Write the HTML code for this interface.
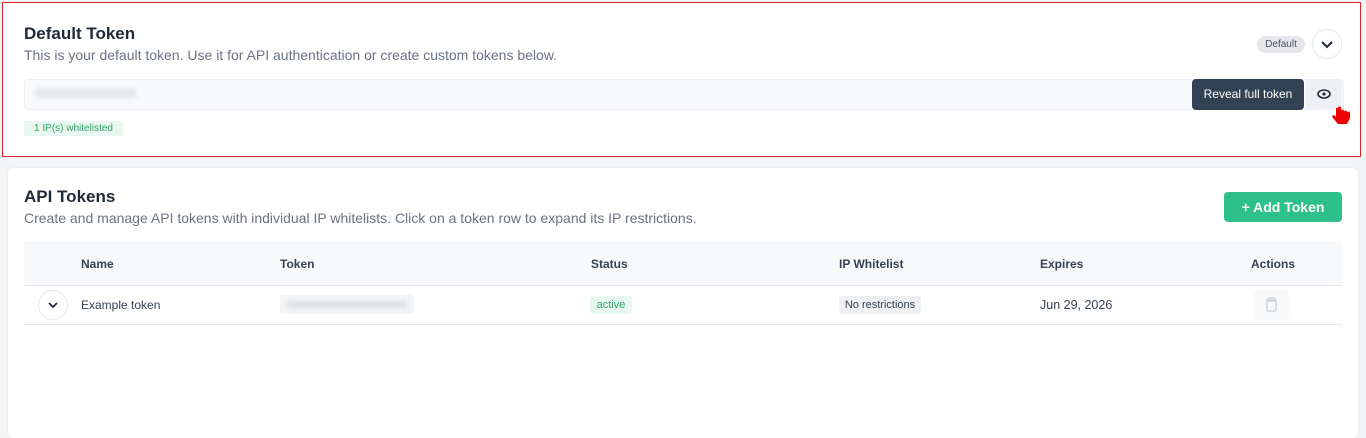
<!DOCTYPE html>
<html><head><style>
body{margin:0;width:1366px;height:431px;background:#f3f4f6;font-family:"Liberation Sans",sans-serif;position:relative;overflow:hidden;color:#1f2937}
.a{position:absolute}
.card1{left:3px;top:3px;width:1357px;height:153px;background:#fff;outline:1px solid #e0242f;outline-offset:0}
.card2{left:8px;top:168px;width:1350px;height:270px;background:#fff;border-radius:6px;box-shadow:0 0 2px rgba(0,0,0,.08)}
h2{margin:0;font-size:17px;font-weight:bold;color:#1f2937}
.sub{font-size:14px;color:#6b7280}
.th{font-size:12px;font-weight:bold;color:#374151;top:257px}
.td{font-size:12px;color:#374151;top:298px}
</style></head><body>
<div class="a card1"></div>
<div class="a" style="left:24px;top:24px"><h2>Default Token</h2></div>
<div class="a sub" style="left:24px;top:47px">This is your default token. Use it for API authentication or create custom tokens below.</div>
<div class="a" style="left:1257px;top:36px;width:48px;height:17px;background:#e5e7eb;border-radius:9px;font-size:10px;color:#4b5563;text-align:center;line-height:17px">Default</div>
<div class="a" style="left:1312px;top:29px;width:28px;height:28px;border:1px solid #e5e7eb;border-radius:50%;background:#fff"><svg width="28" height="28"><path d="M9 12l5 5 5-5" stroke="#1f2937" stroke-width="2" fill="none"/></svg></div>
<div class="a" style="left:24px;top:79px;width:1318px;height:29px;background:#f9fafb;border:1px solid #eceef1;border-radius:4px"></div>
<div class="a" style="left:35px;top:88px;width:102px;height:10px;background:#e5e7eb;border-radius:4px;filter:blur(2px)"></div>
<div class="a" style="left:1306px;top:79px;width:36px;height:31px;background:#eef0f3;border-radius:4px"><svg width="36" height="31"><ellipse cx="18" cy="15" rx="6" ry="4" stroke="#1f2937" stroke-width="1.6" fill="none"/><circle cx="18" cy="15" r="1.6" fill="#1f2937"/></svg></div>
<div class="a" style="left:1192px;top:79px;width:112px;height:31px;background:#334155;border-radius:4px;color:#fff;font-size:12px;line-height:31px;text-align:center">Reveal full token</div>
<div class="a" style="left:1330px;top:100px;width:20px;height:24px"><svg width="22" height="26"><path d="M6 8v9l-2-2c-2 0-2 2-1 3l5 6h9l3-6v-5c0-2-3-2-3 0v-1c0-2-3-2-3 0v-1c0-2-3-2-3 0V8c0-2-3-2-3 0z" fill="#e00" /></svg></div>
<div class="a" style="left:24px;top:121px;width:99px;height:15px;background:#e8f7ef;font-size:10px;color:#34a46b;line-height:15px;text-align:center">1 IP(s) whitelisted</div>

<div class="a card2"></div>
<div class="a" style="left:24px;top:187px"><h2>API Tokens</h2></div>
<div class="a sub" style="left:24px;top:210px">Create and manage API tokens with individual IP whitelists. Click on a token row to expand its IP restrictions.</div>
<div class="a" style="left:1224px;top:192px;width:118px;height:30px;background:#2ec08b;border-radius:4px;color:#fff;font-size:14px;font-weight:bold;line-height:30px;text-align:center">+ Add Token</div>
<div class="a" style="left:24px;top:241px;width:1318px;height:44px;background:#f8f9fb;border-bottom:1px solid #e5e7eb"></div>
<div class="a th" style="left:81px">Name</div>
<div class="a th" style="left:280px">Token</div>
<div class="a th" style="left:591px">Status</div>
<div class="a th" style="left:839px">IP Whitelist</div>
<div class="a th" style="left:1040px">Expires</div>
<div class="a th" style="left:1251px">Actions</div>
<div class="a" style="left:24px;top:324px;width:1318px;height:1px;background:#e5e7eb"></div>
<div class="a" style="left:38px;top:290px;width:28px;height:28px;border:1px solid #e5e7eb;border-radius:50%"><svg width="28" height="28"><path d="M10 12l4 4 4-4" stroke="#1f2937" stroke-width="1.8" fill="none"/></svg></div>
<div class="a td" style="left:81px">Example token</div>
<div class="a" style="left:280px;top:295px;width:134px;height:19px;background:#f3f4f6;border-radius:3px"></div>
<div class="a" style="left:287px;top:301px;width:120px;height:7px;background:#dfe2e6;filter:blur(2px)"></div>
<div class="a" style="left:590px;top:296px;width:42px;height:18px;background:#e8f7ef;border-radius:3px;font-size:11px;color:#34a46b;text-align:center;line-height:18px">active</div>
<div class="a" style="left:839px;top:296px;width:82px;height:18px;background:#eef0f3;border-radius:3px;font-size:11px;color:#374151;text-align:center;line-height:18px">No restrictions</div>
<div class="a td" style="left:1040px;font-size:12.5px">Jun 29, 2026</div>
<div class="a" style="left:1254px;top:290px;width:35px;height:30px;background:#f8f9fb;border-radius:4px"><svg width="35" height="30"><rect x="13" y="11" width="9" height="10" rx="1" fill="none" stroke="#cfd4da" stroke-width="1.5"/><path d="M12 10h11M15 10V8h5v2" stroke="#cfd4da" stroke-width="1.5" fill="none"/></svg></div>
</body></html>
